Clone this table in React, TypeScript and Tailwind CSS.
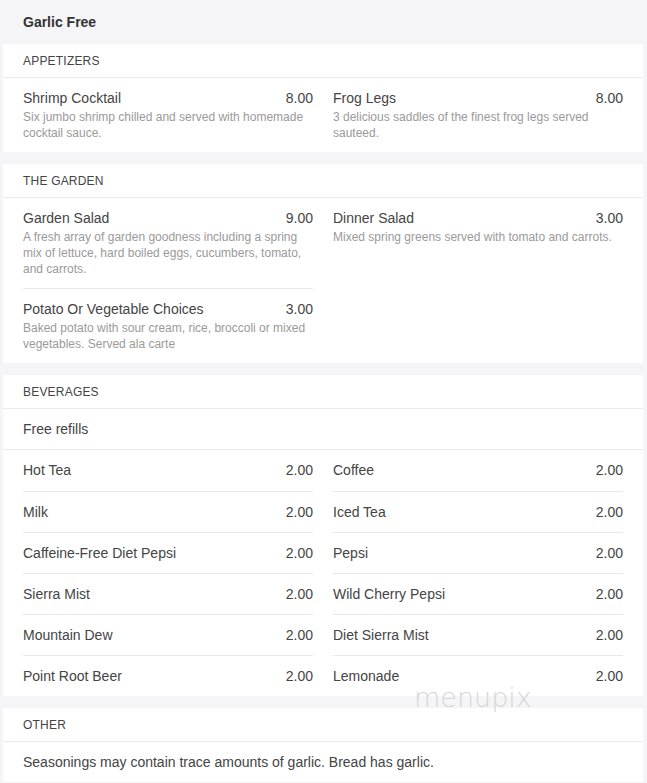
import React from "react";

type Item = { name: string; price: string; desc?: string };

const font = { fontFamily: '"Liberation Sans", Arial, sans-serif' };

function SectionTitle({ children }: { children: React.ReactNode }) {
  return (
    <div className="h-[34px] flex items-center px-5 border-b border-[#ececec] text-[12px] text-[#444] tracking-[0.2px]">
      {children}
    </div>
  );
}

function DescItem({ item, first }: { item: Item; first: boolean }) {
  return (
    <div className={`pt-[11px] pb-[11px] ${first ? "" : "border-t border-[#e8e8e8]"}`}>
      <div className="flex justify-between text-[14px] leading-[18px] text-[#444]">
        <span>{item.name}</span>
        <span>{item.price}</span>
      </div>
      {item.desc && (
        <div className="mt-[2px] text-[12px] leading-[16px] text-[#9a9a9a]">{item.desc}</div>
      )}
    </div>
  );
}

function Column({ items }: { items: Item[] }) {
  return (
    <div>
      {items.map((it, i) => (
        <DescItem key={it.name} item={it} first={i === 0} />
      ))}
    </div>
  );
}

function BevColumn({ items }: { items: Item[] }) {
  return (
    <div>
      {items.map((it, i) => (
        <div
          key={it.name}
          className={`h-[41px] flex items-center justify-between text-[14px] text-[#444] ${i === 0 ? "" : "border-t border-[#e8e8e8]"}`}
        >
          <span>{it.name}</span>
          <span>{it.price}</span>
        </div>
      ))}
    </div>
  );
}

export default function App() {
  const bevLeft: Item[] = [
    { name: "Hot Tea", price: "2.00" },
    { name: "Milk", price: "2.00" },
    { name: "Caffeine-Free Diet Pepsi", price: "2.00" },
    { name: "Sierra Mist", price: "2.00" },
    { name: "Mountain Dew", price: "2.00" },
    { name: "Point Root Beer", price: "2.00" },
  ];
  const bevRight: Item[] = [
    { name: "Coffee", price: "2.00" },
    { name: "Iced Tea", price: "2.00" },
    { name: "Pepsi", price: "2.00" },
    { name: "Wild Cherry Pepsi", price: "2.00" },
    { name: "Diet Sierra Mist", price: "2.00" },
    { name: "Lemonade", price: "2.00" },
  ];

  return (
    <div className="relative w-[647px] h-[783px] overflow-hidden bg-[#f5f5f7]" style={font}>
      <div className="h-[44px] flex items-center pl-[23px] text-[14px] font-bold text-[#333]">
        Garlic Free
      </div>

      <div className="flex flex-col gap-3 pl-[3px]">
        <div className="w-[640px] bg-white">
          <SectionTitle>APPETIZERS</SectionTitle>
          <div className="grid grid-cols-2 gap-x-5 px-5">
            <Column
              items={[
                {
                  name: "Shrimp Cocktail",
                  price: "8.00",
                  desc: "Six jumbo shrimp chilled and served with homemade cocktail sauce.",
                },
              ]}
            />
            <Column
              items={[
                {
                  name: "Frog Legs",
                  price: "8.00",
                  desc: "3 delicious saddles of the finest frog legs served sauteed.",
                },
              ]}
            />
          </div>
        </div>

        <div className="w-[640px] bg-white">
          <SectionTitle>THE GARDEN</SectionTitle>
          <div className="grid grid-cols-2 gap-x-5 px-5">
            <Column
              items={[
                {
                  name: "Garden Salad",
                  price: "9.00",
                  desc: "A fresh array of garden goodness including a spring mix of lettuce, hard boiled eggs, cucumbers, tomato, and carrots.",
                },
                {
                  name: "Potato Or Vegetable Choices",
                  price: "3.00",
                  desc: "Baked potato with sour cream, rice, broccoli or mixed vegetables. Served ala carte",
                },
              ]}
            />
            <Column
              items={[
                {
                  name: "Dinner Salad",
                  price: "3.00",
                  desc: "Mixed spring greens served with tomato and carrots.",
                },
              ]}
            />
          </div>
        </div>

        <div className="w-[640px] bg-white">
          <SectionTitle>BEVERAGES</SectionTitle>
          <div className="h-[41px] flex items-center px-5 border-b border-[#ececec] text-[14px] text-[#444]">
            Free refills
          </div>
          <div className="grid grid-cols-2 gap-x-5 px-5">
            <BevColumn items={bevLeft} />
            <BevColumn items={bevRight} />
          </div>
        </div>

        <div className="w-[640px] bg-white">
          <SectionTitle>OTHER</SectionTitle>
          <div className="h-[40px] flex items-center px-5 text-[14px] text-[#444]">
            Seasonings may contain trace amounts of garlic. Bread has garlic.
          </div>
        </div>
      </div>

      <div
        className="absolute left-[414px] top-[684px] text-[27px] leading-none text-[#d6d6d6] pointer-events-none"
        style={{ fontFamily: '"DejaVu Sans", sans-serif', fontWeight: 200 }}
      >
        menupix
      </div>
    </div>
  );
}
